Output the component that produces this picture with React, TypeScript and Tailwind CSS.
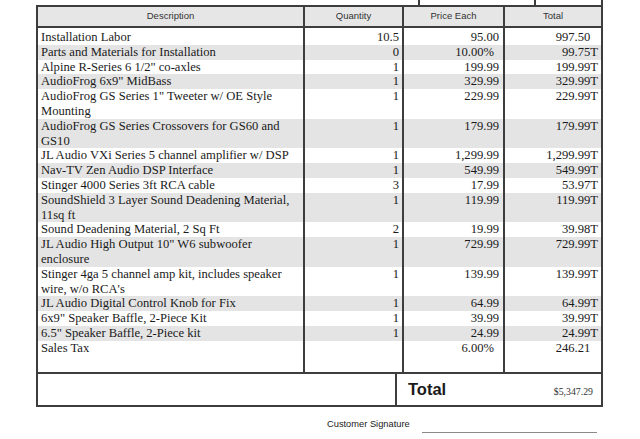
const items = [
  { d: ["Installation Labor"], q: "10.5", p: "95.00", t: "997.50", tax: false },
  { d: ["Parts and Materials for Installation"], q: "0", p: "10.00%", t: "99.75", tax: true },
  { d: ['Alpine R-Series 6 1/2" co-axles'], q: "1", p: "199.99", t: "199.99", tax: true },
  { d: ['AudioFrog 6x9" MidBass'], q: "1", p: "329.99", t: "329.99", tax: true },
  { d: ['AudioFrog GS Series 1" Tweeter w/ OE Style', "Mounting"], q: "1", p: "229.99", t: "229.99", tax: true },
  { d: ["AudioFrog GS Series Crossovers for GS60 and", "GS10"], q: "1", p: "179.99", t: "179.99", tax: true },
  { d: ["JL Audio VXi Series 5 channel amplifier w/ DSP"], q: "1", p: "1,299.99", t: "1,299.99", tax: true },
  { d: ["Nav-TV Zen Audio DSP Interface"], q: "1", p: "549.99", t: "549.99", tax: true },
  { d: ["Stinger 4000 Series 3ft RCA cable"], q: "3", p: "17.99", t: "53.97", tax: true },
  { d: ["SoundShield 3 Layer Sound Deadening Material,", "11sq ft"], q: "1", p: "119.99", t: "119.99", tax: true },
  { d: ["Sound Deadening Material, 2 Sq Ft"], q: "2", p: "19.99", t: "39.98", tax: true },
  { d: ['JL Audio High Output 10" W6 subwoofer', "enclosure"], q: "1", p: "729.99", t: "729.99", tax: true },
  { d: ["Stinger 4ga 5 channel amp kit, includes speaker", "wire, w/o RCA's"], q: "1", p: "139.99", t: "139.99", tax: true },
  { d: ["JL Audio Digital Control Knob for Fix"], q: "1", p: "64.99", t: "64.99", tax: true },
  { d: ['6x9" Speaker Baffle, 2-Piece Kit'], q: "1", p: "39.99", t: "39.99", tax: true },
  { d: ['6.5" Speaker Baffle, 2-Piece kit'], q: "1", p: "24.99", t: "24.99", tax: true },
  { d: ["Sales Tax"], q: "", p: "6.00%", t: "246.21", tax: false },
];

const cols = "grid grid-cols-[265px_99px_101px_98px]";

function App() {
  return (
    <div className="w-[640px] h-[439px] bg-white overflow-hidden text-[#1a1a1a]">
      {/* box cut off at the top */}
      <div className="ml-[418px] w-[185px] h-[5px] border-x-2 border-[#3d3d3d] flex">
        <div className="w-[116px] border-r-2 border-[#3d3d3d]" />
      </div>

      {/* line items */}
      <div className="ml-[36px] w-[567px] h-[369px] border-2 border-[#3d3d3d] flex flex-col">
        <div className={`${cols} h-[21px] bg-[#e6e6e6] border-b-2 border-[#3d3d3d] font-['Liberation_Sans',Arial,sans-serif] text-[9.5px] text-[#333]`}>
          <div className="flex items-center justify-center">Description</div>
          <div className="flex items-center justify-center border-l-2 border-[#3d3d3d]">Quantity</div>
          <div className="flex items-center justify-center border-l-2 border-[#3d3d3d]">Price Each</div>
          <div className="flex items-center justify-center border-l-2 border-[#3d3d3d]">Total</div>
        </div>

        <div className="flex-1 flex flex-col font-['Liberation_Serif','Times_New_Roman',serif] text-[12.6px] leading-[14.8px]">
          <div className={`${cols} h-[2px]`}>
            <div />
            <div className="border-l-2 border-[#3d3d3d]" />
            <div className="border-l-2 border-[#3d3d3d]" />
            <div className="border-l-2 border-[#3d3d3d]" />
          </div>
          {items.map((it, i) => (
            <div key={i} className={`${cols} ${i % 2 === 1 ? "bg-[#e4e4e4]" : "bg-white"}`}>
              <div className="pl-[3px] whitespace-nowrap">
                {it.d.map((line) => (
                  <div key={line}>{line}</div>
                ))}
              </div>
              <div className="border-l-2 border-[#3d3d3d] text-right pr-[3px]">{it.q}</div>
              <div className={`border-l-2 border-[#3d3d3d] text-right ${it.p.endsWith("%") ? "pr-[9px]" : "pr-[4px]"}`}>
                {it.p}
              </div>
              <div className="border-l-2 border-[#3d3d3d] text-right pr-[3px]">
                {it.t}
                <span className={it.tax ? "" : "invisible"}>T</span>
              </div>
            </div>
          ))}
          <div className={`${cols} flex-1`}>
            <div />
            <div className="border-l-2 border-[#3d3d3d]" />
            <div className="border-l-2 border-[#3d3d3d]" />
            <div className="border-l-2 border-[#3d3d3d]" />
          </div>
        </div>
      </div>

      {/* total */}
      <div className="ml-[36px] w-[567px] h-[33px] border-x-2 border-b-2 border-[#3d3d3d] flex">
        <div className="w-[357px]" />
        <div className="flex-1 border-l-2 border-[#3d3d3d] flex items-center pl-[11px] pr-[8px]">
          <div className="flex-1 flex items-baseline justify-between">
            <span className="font-['Liberation_Sans',Arial,sans-serif] font-bold text-[16.5px]">Total</span>
            <span className="font-['Liberation_Serif','Times_New_Roman',serif] text-[9.8px] text-[#333]">$5,347.29</span>
          </div>
        </div>
      </div>

      {/* signature */}
      <div className="flex items-start mt-[11px]">
        <span className="ml-[327px] font-['Liberation_Sans',Arial,sans-serif] text-[9.3px] text-[#222]">
          Customer Signature
        </span>
        <div className="ml-[12px] mt-[14px] w-[175px] border-t border-[#8a8a8a]" />
      </div>
    </div>
  );
}

export default App;
